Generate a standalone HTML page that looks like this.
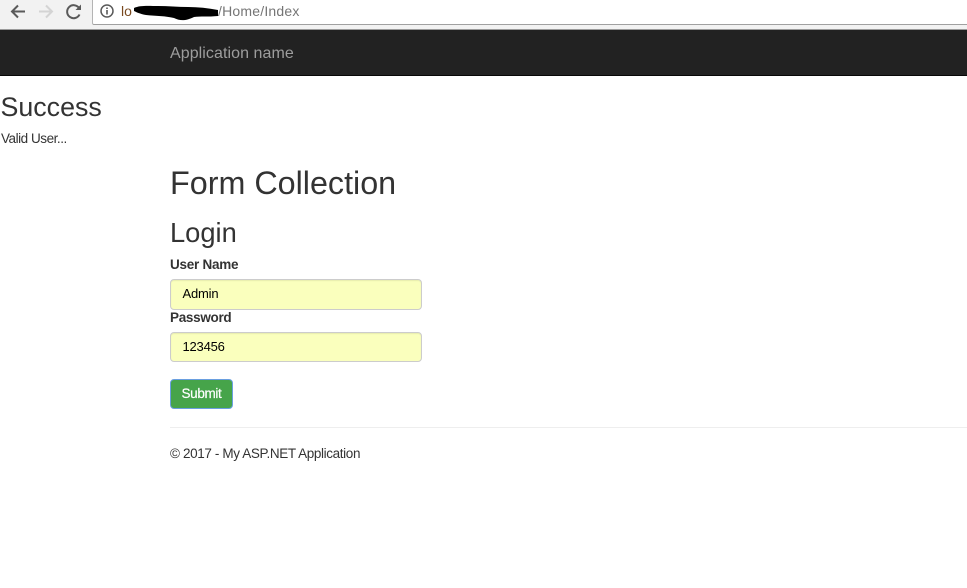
<!DOCTYPE html>
<html>
<head>
<meta charset="utf-8">
<style>
html,body{margin:0;padding:0;background:#fff;width:967px;height:588px;overflow:hidden}
body{font-family:"Liberation Sans",sans-serif;color:#333;font-size:14px;position:relative}
.a{position:absolute;white-space:nowrap}
.field{position:absolute;left:170px;width:250px;background:#faffbd;border:1px solid #ccc;border-radius:4px;box-shadow:inset 0 1px 1px rgba(0,0,0,.075);font-size:13px;color:#000}
.field span{position:absolute;left:11.500px;line-height:16px;letter-spacing:-.2px}
</style>
</head>
<body>
<div class="a" style="left:0;top:0;width:967px;height:29px;background:#f2f2f2"></div>
<div class="a" style="left:92px;top:0;width:875px;height:24px;background:#fff;border-left:1px solid #b4b4b4;border-bottom:1px solid #a0a0a0;border-bottom-left-radius:2px"></div>
<div class="a" style="left:0;top:29px;width:967px;height:1px;background:#9a9a9a"></div>
<svg class="a" style="left:0;top:0" width="92" height="24" viewBox="0 0 92 24" fill="none">
<path d="M25 11.500H12.500M18 5.500L12 11.500L18 17.500" stroke="#5a5a5a" stroke-width="2"/>
<path d="M39 11.500H51.500M46 5.500L52 11.500L46 17.500" stroke="#d4d4d4" stroke-width="2"/>
<path d="M79.500 14.500A6.500 6.500 0 1 1 79 8" stroke="#5a5a5a" stroke-width="2"/>
<path d="M81 4.500V10H75.500Z" fill="#5a5a5a"/>
</svg>
<svg class="a" style="left:100px;top:4px" width="15" height="15" viewBox="0 0 15 15" fill="none">
<circle cx="7" cy="7" r="6" stroke="#5a5a5a" stroke-width="1.500"/>
<rect x="6.200" y="6" width="1.600" height="4.500" fill="#5a5a5a"/>
<rect x="6.200" y="3.500" width="1.600" height="1.500" fill="#5a5a5a"/>
</svg>
<div class="a" style="left:121px;top:3px;font-size:14px;line-height:16px;color:#7a4a20">lo</div>
<svg class="a" style="left:128px;top:3px" width="92" height="18" viewBox="0 0 92 18">
<path d="M6 5C12 2 22 3 30 3C40 3 50 4 60 4C70 4 80 5 90 7L90 13C80 14 72 13 66 14C58 18 52 18 46 15C38 13 28 13 18 12C12 11 8 9 6 8Z" fill="#000"/>
</svg>
<div class="a" style="left:218px;top:3px;font-size:14px;line-height:16px;letter-spacing:.2px;color:#757575">/Home/Index</div>

<div class="a" style="left:0;top:30px;width:967px;height:45px;background:#222;border-bottom:1px solid #080808"></div>
<div class="a" style="left:170px;top:44px;font-size:16px;line-height:20px;letter-spacing:.07px;color:#9d9d9d">Application name</div>

<div class="a" style="left:0.500px;top:92px;font-size:26.800px;line-height:31px;color:#333">Success</div>
<div class="a" style="left:1px;top:131px;font-size:13.500px;line-height:16px;letter-spacing:-.46px;color:#333">Valid User...</div>

<div class="a" style="left:170px;top:164px;font-size:32.300px;line-height:38px;color:#333">Form Collection</div>
<div class="a" style="left:170px;top:217px;font-size:27.300px;line-height:32px;color:#333">Login</div>

<div class="a" style="left:170px;top:257px;font-size:13.500px;line-height:16px;font-weight:bold;letter-spacing:-.25px">User Name</div>
<div class="field" style="top:279px;height:29px"><span style="top:6px">Admin</span></div>
<div class="a" style="left:170px;top:310px;font-size:13.500px;line-height:16px;font-weight:bold;letter-spacing:-.3px">Password</div>
<div class="field" style="top:332px;height:28px"><span style="top:6px">123456</span></div>

<div class="a" style="left:170px;top:379px;width:61px;height:28px;background:#46a44a;border:1px solid #6a9fe0;border-radius:4px;color:#fff;text-align:center;line-height:27px;font-size:13.500px;letter-spacing:-.35px;-webkit-text-stroke:.2px #fff">Submit</div>

<div class="a" style="left:170px;top:427px;width:797px;height:1px;background:#eee"></div>
<div class="a" style="left:170px;top:446px;font-size:13.500px;line-height:16px;letter-spacing:-.37px;color:#333">© 2017 - My ASP.NET Application</div>
</body>
</html>
